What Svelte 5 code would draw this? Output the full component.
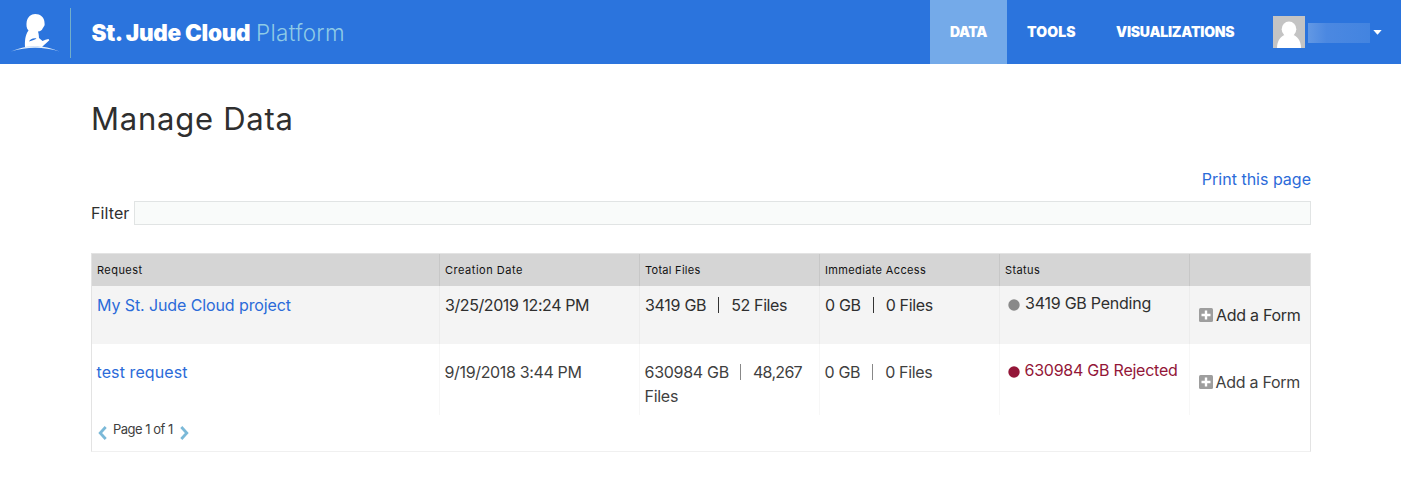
<script>
  const navItems = [
    { label: 'DATA', active: true, width: 37, space: -0.45 },
    { label: 'TOOLS', active: false, width: 49, space: 0.1 },
    { label: 'VISUALIZATIONS', active: false, width: 119, space: -0.23 }
  ];

  const headers = [
    { label: 'Request', space: 0.45 },
    { label: 'Creation Date', space: 0.52 },
    { label: 'Total Files', space: 0.28 },
    { label: 'Immediate Access', space: 0.36 },
    { label: 'Status', space: 0.4 },
    { label: '', space: 0 }
  ];

  const rows = [
    {
      name: 'My St. Jude Cloud project',
      created: '3/25/2019 12:24 PM',
      totalSize: '3419 GB',
      totalFiles: ['52 Files'],
      size: '0 GB',
      files: '0 Files',
      status: '3419 GB Pending',
      state: 'pending'
    },
    {
      name: 'test request',
      created: '9/19/2018 3:44 PM',
      totalSize: '630984 GB',
      totalFiles: ['48,267', 'Files'],
      size: '0 GB',
      files: '0 Files',
      status: '630984 GB Rejected',
      state: 'rejected'
    }
  ];
</script>

<header class="topbar">
  <svg class="logo" width="50" height="40" viewBox="0 0 50 40" aria-hidden="true">
    <path d="M0 38.500 Q24 28 48.500 38.500 Q24 31 0 38.500 Z" fill="#e6f1fb" />
    <path
      d="M24.200 1 C29.500 1 33 4.500 33.300 8 C33.500 10 33.800 11 33.600 12 C33.300 13.500 32.200 14.300 31.600 15.500 C31 17.200 29.500 18.200 27 18.600 C27.800 21 27.900 23.300 28 25 L31.500 28 L34.500 26.800 L37.500 26 L38.300 27.300 L34.800 30.500 L32.500 32.500 L31 34 C25 33.300 19 33.400 14 34 C13.800 28.500 14 22 17.500 17.600 C15.300 15.300 15.200 12 15.700 8.500 C16.500 4 20 1 24.200 1 Z"
      fill="#fff"
    />
    <path d="M18 28.500 C18.800 26.200 22 24.800 25.500 25.400 C24.500 26.800 21.500 26.900 18 28.500 Z" fill="#2b74dd" />
  </svg>
  <div class="divider"></div>
  <div class="brand"><span class="name">St. Jude Cloud</span><span class="product">Platform</span></div>
  <nav>
    {#each navItems as item}
      <a href="#top" class:active={item.active} style="width: {item.width}px; letter-spacing: {item.space}px">{item.label}</a>
    {/each}
  </nav>
  <div class="user">
    <svg width="32" height="32" viewBox="0 0 32 32" aria-hidden="true">
      <rect width="32" height="32" fill="#c4c4c4" />
      <ellipse cx="16" cy="13.200" rx="7.300" ry="7.600" fill="#fff" />
      <path d="M4 32 C4 24.500 8 20 12.500 18.800 H19.500 C24 20 28 24.500 28 32 Z" fill="#fff" />
    </svg>
    <div class="username"></div>
    <svg class="caret" width="9" height="5" viewBox="0 0 9 5" aria-hidden="true"><path d="M0.300 0 H8.700 L4.500 4.800 Z" fill="#fff" /></svg>
  </div>
</header>

<main>
  <h1>Manage Data</h1>
  <div class="print"><a href="#top">Print this page</a></div>
  <div class="filter">
    <label for="filter">Filter</label>
    <input id="filter" type="text" />
  </div>

  <section class="table">
    <div class="row head">
      {#each headers as h}
        <div class="cell" style="letter-spacing: {h.space}px">{h.label}</div>
      {/each}
    </div>
    {#each rows as r}
      <div class="row {r.state}">
        <div class="cell request"><a href="#top">{r.name}</a></div>
        <div class="cell date">{r.created}</div>
        <div class="cell total">
          <div class="line"><span>{r.totalSize}</span><i class="bar"></i><span class="count">{r.totalFiles[0]}</span></div>
          {#if r.totalFiles[1]}<div class="line">{r.totalFiles[1]}</div>{/if}
        </div>
        <div class="cell access">
          <div class="line"><span>{r.size}</span><i class="bar"></i><span>{r.files}</span></div>
        </div>
        <div class="cell status">
          <svg class="dot" width="12" height="12" viewBox="0 0 12 12" aria-hidden="true"><circle cx="6" cy="6" r="5.700" /></svg>
          <span>{r.status}</span>
        </div>
        <div class="cell add">
          <svg width="14" height="14" viewBox="0 0 14 14" aria-hidden="true">
            <rect width="14" height="14" rx="1.500" fill="#9e9e9e" />
            <path d="M7 2.500 V11.500 M2.500 7 H11.500" stroke="#fff" stroke-width="2.400" />
          </svg>
          <span>Add a Form</span>
        </div>
      </div>
    {/each}
    <div class="pager">
      <svg width="9" height="14" viewBox="0 0 9 14" aria-hidden="true"><path d="M7.700 1 L2.200 7 L7.700 13" /></svg>
      <span>Page 1 of 1</span>
      <svg width="9" height="14" viewBox="0 0 9 14" aria-hidden="true"><path d="M1.300 1 L6.800 7 L1.300 13" /></svg>
    </div>
  </section>
</main>

<style>
  :global(body) {
    margin: 0;
    background: #fff;
    font-family: Inter, 'Liberation Sans', sans-serif;
    font-size: 16px;
    line-height: 24px;
    color: #2f2f2f;
  }
  a {
    color: #2b6bd9;
    text-decoration: none;
  }
  .topbar {
    display: flex;
    height: 64px;
    background: #2b74dd;
    color: #fff;
  }
  .logo {
    flex: none;
    margin: 13px 0 0 11px;
    overflow: visible;
  }
  .divider {
    width: 1px;
    height: 50px;
    margin: 8px 0 0 9px;
    background: #73aec9;
  }
  .brand {
    display: flex;
    margin-left: 20.5px;
    padding-top: 17px;
    font-size: 22.5px;
    line-height: 32px;
    white-space: nowrap;
  }
  .name {
    width: 164.5px;
    font-weight: 900;
    letter-spacing: -0.3px;
  }
  .product {
    font-weight: 300;
    letter-spacing: 0.3px;
    color: #8fcbe6;
  }
  nav {
    display: flex;
    margin-left: auto;
    font-size: 14px;
    font-weight: 900;
    line-height: 64px;
  }
  nav a {
    padding: 0 20px;
    color: #fff;
  }
  nav a.active {
    background: #74aae9;
  }
  .user {
    display: flex;
    width: 128px;
    margin-left: 18px;
    padding-top: 16px;
  }
  .username {
    width: 62px;
    height: 20px;
    margin: 7px 0 0 3px;
    background: linear-gradient(90deg, #6298e4, #4b88e1 30%, #4384e0);
  }
  .caret {
    margin: 14px 0 0 3px;
  }
  main {
    padding: 0 90px 0 91px;
  }
  h1 {
    margin: 35px 0 0;
    font-size: 31px;
    font-weight: 400;
    line-height: 40px;
    letter-spacing: 0.75px;
  }
  .print {
    margin-top: 28px;
    text-align: right;
  }
  .filter {
    display: flex;
    height: 24px;
    margin-top: 10px;
  }
  .filter label {
    width: 43px;
    letter-spacing: 0.1px;
  }
  .filter input {
    flex: 1;
    box-sizing: border-box;
    height: 24px;
    border: 1px solid #e1e4e4;
    padding: 0 6px;
    background: #f9fbfa;
    font: inherit;
  }
  .table {
    margin-top: 28px;
    border: 1px solid #e3e3e3;
    border-bottom-color: #f0f0f0;
  }
  .row {
    display: grid;
    grid-template-columns: 347px 200px 180px 180px 190px 121px;
  }
  .cell {
    box-sizing: border-box;
    padding: 7px 0 0 5px;
    white-space: nowrap;
  }
  .cell + .cell {
    border-left: 1px solid #ececec;
  }
  .head {
    height: 32px;
    background: #d5d5d5;
    color: #111;
    font-size: 11px;
    line-height: 18px;
  }
  .head .cell + .cell {
    border-left-color: #c7c7c7;
  }
  .pending {
    height: 58px;
    background: #f4f4f4;
  }
  .rejected {
    height: 71px;
    color: #3f3f3f;
  }
  .rejected .cell {
    padding-top: 16px;
    padding-left: 4.5px;
  }
  .rejected .cell + .cell {
    border-left-color: #f7f7f7;
  }
  .request {
    letter-spacing: -0.1px;
  }
  .rejected .request {
    letter-spacing: 0.1px;
  }
  .date {
    letter-spacing: -0.42px;
  }
  .rejected .date {
    letter-spacing: -0.35px;
  }
  .line {
    display: flex;
  }
  .total {
    letter-spacing: -0.28px;
  }
  .total .count {
    letter-spacing: -0.4px;
  }
  .rejected .count {
    letter-spacing: -0.7px;
  }
  .access {
    letter-spacing: -0.33px;
  }
  .bar {
    width: 1px;
    height: 16px;
    margin: 4px 12px 0;
    background: #333;
  }
  .rejected .total .bar {
    margin: 4px 12px 0 11px;
  }
  .rejected .bar {
    background: #888;
  }
  .status {
    display: flex;
    letter-spacing: -0.24px;
  }
  .pending .status {
    padding-top: 5px;
  }
  .rejected .status {
    padding-top: 14px;
    color: #931638;
  }
  .dot {
    margin: 8px 5px 0 3px;
    fill: #898989;
  }
  .rejected .dot {
    fill: #931638;
  }
  .add {
    display: flex;
    gap: 3px;
    letter-spacing: -0.28px;
  }
  .add svg {
    margin-top: 5px;
  }
  .pending .add {
    padding-top: 17px;
    padding-left: 9px;
  }
  .rejected .add {
    padding-top: 26px;
    padding-left: 8.5px;
  }
  .pager {
    display: flex;
    height: 36px;
    padding-left: 6px;
    color: #3f3f3f;
    font-size: 13px;
    line-height: 28px;
    letter-spacing: -0.5px;
  }
  .pager span {
    width: 66.5px;
    padding-left: 6px;
  }
  .pager svg {
    margin-top: 11px;
    fill: none;
    stroke: #7bb9d8;
    stroke-width: 2.8;
  }
</style>
